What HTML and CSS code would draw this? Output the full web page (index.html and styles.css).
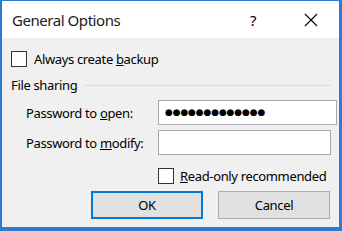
FILE: index.html
```html
<!DOCTYPE html>
<html lang="en">
<head>
    <meta charset="UTF-8">
    <title>General Options</title>
    <link rel="stylesheet" href="styles.css">
</head>
<body>
    <div class="window">
        <div class="titlebar">
            <span class="title">General Options</span>
            <span class="help">?</span>
            <span class="close">
                <svg width="14" height="14" viewBox="0 0 14 14">
                    <path d="M1 1 L13 13 M13 1 L1 13" stroke="#000" stroke-width="1.1" fill="none"/>
                </svg>
            </span>
        </div>

        <div class="content">
            <div class="check-row">
                <span class="checkbox"></span>
                <span>Always create <u>b</u>ackup</span>
            </div>

            <div class="group-head">
                <span>File sharing</span>
                <span class="group-line"></span>
            </div>

            <div class="field">
                <label>Password to <u>o</u>pen:</label>
                <div class="input dots">●●●●●●●●●●●●●</div>
            </div>
            <div class="field">
                <label>Password to <u>m</u>odify:</label>
                <div class="input"></div>
            </div>

            <div class="check-row readonly">
                <span class="checkbox"></span>
                <span><u>R</u>ead-only recommended</span>
            </div>

            <div class="buttons">
                <div class="btn default">OK</div>
                <div class="btn">Cancel</div>
            </div>
        </div>
    </div>
</body>
</html>
```

FILE: styles.css
```css
body {
    margin: 0;
    font-family: "Noto Sans", "Open Sans", sans-serif;
    font-size: 13px;
    letter-spacing: -0.35px;
    color: #000;
    background: #fff;
}

.window {
    width: 342px;
    height: 231px;
    box-sizing: border-box;
    border: 2px solid #2b7bd3;
    border-top-width: 1px;
    border-right-width: 3px;
    border-bottom-width: 4px;
    background: #f0f0f0;
    display: flex;
    flex-direction: column;
}

.titlebar {
    height: 37px;
    background: #fff;
    display: flex;
    align-items: center;
    flex-shrink: 0;
}

.title {
    font-size: 15px;
    letter-spacing: -0.45px;
    margin-left: 10px;
    color: #1a1a1a;
    flex: 1;
}

.help {
    font-size: 15px;
    width: 20px;
    text-align: center;
    margin-right: 41px;
}

.close {
    width: 14px;
    height: 14px;
    margin-right: 21px;
    display: flex;
}

.content {
    padding: 13px 0 0 9px;
}

.check-row {
    display: flex;
    align-items: center;
    height: 16px;
    white-space: nowrap;
}

.checkbox {
    width: 14px;
    height: 14px;
    border: 1px solid #333;
    background: #fff;
    margin-right: 7px;
    flex-shrink: 0;
}

.group-head {
    display: flex;
    align-items: center;
    height: 14px;
    margin-top: 11px;
}

.group-line {
    flex: 1;
    height: 1px;
    background: #dcdcdc;
    margin: 1px 8px 0 7px;
}

.field {
    display: flex;
    align-items: center;
    height: 25px;
    margin-left: 15px;
}

.group-head + .field {
    margin-top: 8px;
}

.field + .field {
    margin-top: 5px;
}

.field label {
    width: 132px;
}

.input {
    width: 171px;
    height: 23px;
    border: 1px solid #a9a9a9;
    background: #fff;
}

.dots {
    font-family: "DejaVu Sans", sans-serif;
    font-size: 9px;
    line-height: 23px;
    letter-spacing: -0.15px;
    padding-left: 6px;
}

.readonly {
    margin-top: 13px;
    margin-left: 147px;
}

.readonly .checkbox {
    margin-right: 6px;
}

.buttons {
    display: flex;
    gap: 15px;
    margin-top: 7px;
    margin-left: 80px;
}

.btn {
    width: 110px;
    height: 26px;
    border: 1px solid #adadad;
    background: #e1e1e1;
    display: flex;
    align-items: center;
    justify-content: center;
}

.default {
    width: 108px;
    height: 24px;
    border: 2px solid #0078d7;
}
```
